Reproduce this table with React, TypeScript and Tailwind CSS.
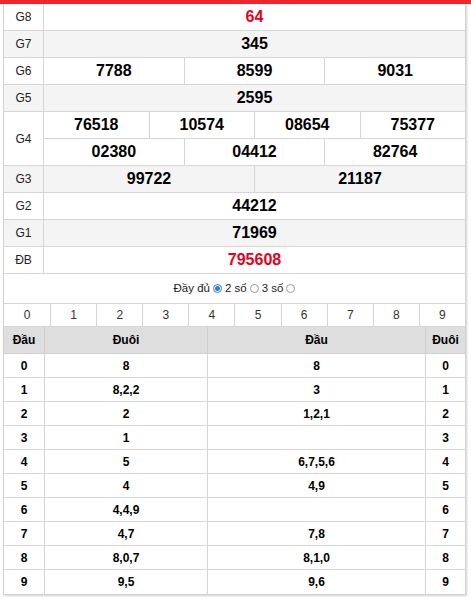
import React from "react";

const RED = "text-[#e8001c]";

function Row({ label, gray, cells }: { label: string; gray?: boolean; cells: { v: string; red?: boolean }[][] }) {
  return (
    <div className={`flex border-b border-[#d6d6d6] ${gray ? "bg-[#f4f4f4]" : "bg-white"}`}>
      <div className="w-[40px] shrink-0 border-r border-[#d6d6d6] flex items-center justify-center text-[12px] text-[#222]">
        {label}
      </div>
      <div className="flex-1 flex flex-col">
        {cells.map((line, i) => (
          <div key={i} className={`flex ${i < cells.length - 1 ? "border-b border-[#d6d6d6] h-[27px]" : "h-[26px]"}`}>
            {line.map((c, j) => (
              <div
                key={j}
                className={`flex-1 flex items-center justify-center text-[16px] font-bold ${j > 0 ? "border-l border-[#d6d6d6]" : ""} ${c.red ? RED : "text-black"}`}
              >
                {c.v}
              </div>
            ))}
          </div>
        ))}
      </div>
    </div>
  );
}

const loto: [string, string, string, string][] = [
  ["0", "8", "8", "0"],
  ["1", "8,2,2", "3", "1"],
  ["2", "2", "1,2,1", "2"],
  ["3", "1", "", "3"],
  ["4", "5", "6,7,5,6", "4"],
  ["5", "4", "4,9", "5"],
  ["6", "4,4,9", "", "6"],
  ["7", "4,7", "7,8", "7"],
  ["8", "8,0,7", "8,1,0", "8"],
  ["9", "9,5", "9,6", "9"],
];

export default function App() {
  const c = (v: string, red?: boolean) => ({ v, red });
  return (
    <div className="w-[471px] h-[599px] bg-white overflow-hidden" style={{ fontFamily: '"Liberation Sans", Arial, sans-serif' }}>
      <div className="h-[4px] bg-[#f1262b]" />
      <div className="ml-[3px] w-[463px] border-x border-b border-[#d2d2d2] shadow-[1px_1px_2px_rgba(0,0,0,0.18)]">
        <Row label="G8" cells={[[c("64", true)]]} />
        <Row label="G7" gray cells={[[c("345")]]} />
        <Row label="G6" cells={[[c("7788"), c("8599"), c("9031")]]} />
        <Row label="G5" gray cells={[[c("2595")]]} />
        <Row
          label="G4"
          cells={[
            [c("76518"), c("10574"), c("08654"), c("75377")],
            [c("02380"), c("04412"), c("82764")],
          ]}
        />
        <Row label="G3" gray cells={[[c("99722"), c("21187")]]} />
        <Row label="G2" cells={[[c("44212")]]} />
        <Row label="G1" gray cells={[[c("71969")]]} />
        <Row label="ĐB" cells={[[c("795608", true)]]} />

        <div className="h-[29px] flex items-center justify-center gap-[3px] text-[11.5px] text-[#222]">
          <span>Đầy đủ</span>
          <span className="w-[9px] h-[9px] rounded-full border border-[#3d7fd6] bg-white flex items-center justify-center">
            <span className="w-[5px] h-[5px] rounded-full bg-[#2f7be0]" />
          </span>
          <span>2 số</span>
          <span className="w-[9px] h-[9px] rounded-full border border-[#9a9a9a] bg-white" />
          <span>3 số</span>
          <span className="w-[9px] h-[9px] rounded-full border border-[#9a9a9a] bg-white" />
        </div>

        <div className="grid grid-cols-10 h-[24px] border-t border-b border-[#d6d6d6]">
          {Array.from({ length: 10 }, (_, i) => (
            <div key={i} className={`flex items-center justify-center text-[12px] text-[#333] ${i > 0 ? "border-l border-[#d6d6d6]" : ""}`}>
              {i}
            </div>
          ))}
        </div>

        <div className="grid grid-cols-[40px_163px_1fr_40px] h-[27px] bg-[#dedede] border-b border-[#d0d0d0] text-[12px] font-bold text-black">
          <div className="flex items-center justify-center">Đầu</div>
          <div className="flex items-center justify-center border-l border-[#cfcfcf]">Đuôi</div>
          <div className="flex items-center justify-center border-l border-[#cfcfcf]">Đầu</div>
          <div className="flex items-center justify-center border-l border-[#cfcfcf]">Đuôi</div>
        </div>

        {loto.map((r, i) => (
          <div
            key={i}
            className={`grid grid-cols-[40px_163px_1fr_40px] h-[24px] text-[12px] font-bold text-black ${i < loto.length - 1 ? "border-b border-[#d6d6d6]" : ""}`}
          >
            <div className="flex items-center justify-center">{r[0]}</div>
            <div className="flex items-center justify-center border-l border-[#d6d6d6]">{r[1]}</div>
            <div className="flex items-center justify-center border-l border-[#d6d6d6]">{r[2]}</div>
            <div className="flex items-center justify-center border-l border-[#d6d6d6]">{r[3]}</div>
          </div>
        ))}
      </div>
    </div>
  );
}
